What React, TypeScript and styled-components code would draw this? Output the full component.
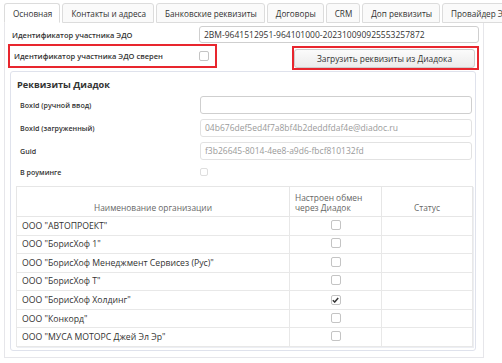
import styled, { createGlobalStyle } from "styled-components";

const GlobalStyle = createGlobalStyle`
    html, body {
        margin: 0;
        padding: 0;
        background: #fff;
    }
    body {
        font-family: "Open Sans", "Liberation Sans", sans-serif;
        color: #333;
    }
`

const Page = styled.div`
    width: 502px;
    height: 363px;
    padding: 3px 0 0 4px;
    box-sizing: border-box;
    overflow: hidden;
`
const TabBar = styled.div`
    display: flex;
    height: 20px;
    width: 700px;
`
const Tab = styled.div<{ active?: boolean }>`
    display: flex;
    align-items: center;
    padding: 0 7px 0 8px;
    margin-right: 2px;
    font-size: 8.2px;
    color: #333;
    white-space: nowrap;
    background: ${p => p.active ? '#fff' : '#fafafa'};
    border: 1px solid #dcdcdc;
    border-bottom: ${p => p.active ? '1px solid #fff' : '1px solid #dcdcdc'};
    border-radius: 3px 3px 0 0;
    box-sizing: border-box;
`
const Content = styled.div`
    width: 480px;
    border: 1px solid #e6e6ea;
    border-top: 0;
    padding: 3px 4px 6px 3px;
    box-sizing: border-box;
`
const TopRow = styled.div`
    display: grid;
    grid-template-columns: 191px 1fr;
    align-items: center;
    height: 17px;
`
const Label = styled.div<{ small?: boolean }>`
    font-size: ${p => p.small ? 7.1 : 7.5}px;
    font-weight: 600;
    color: #333;
    padding-left: 4px;
    white-space: nowrap;
`
const Input = styled.div<{ muted?: boolean, h?: number }>`
    height: ${p => p.h ?? 17}px;
    border: 1px solid ${p => p.muted ? '#e2e2e2' : '#cfcfcf'};
    border-radius: 3px;
    box-sizing: border-box;
    display: flex;
    align-items: center;
    padding: 0 4px;
    font-size: 8.5px;
    color: ${p => p.muted ? '#9a9a9a' : '#333'};
    white-space: nowrap;
    overflow: hidden;
`
const CheckRow = styled.div`
    display: flex;
    justify-content: space-between;
    align-items: flex-start;
    margin-top: 1px;
`
const RedFrame = styled.div<{ w: number }>`
    width: ${p => p.w}px;
    border: 2px solid #e8262e;
    box-sizing: border-box;
`
const SyncedBox = styled.div`
    display: grid;
    grid-template-columns: 189px 1fr;
    align-items: center;
    height: 20px;
`
const ButtonFrame = styled(RedFrame)`
    margin-top: 2px;
    padding: 1px 2px 0 0;
    height: 24px;
`
const Button = styled.div`
    height: 19px;
    border: 1px solid #cdcdcd;
    border-radius: 3px;
    background: linear-gradient(#fbfbfb, #ececec);
    display: flex;
    align-items: center;
    justify-content: center;
    font-size: 8.4px;
    color: #333;
    box-sizing: border-box;
`
const Box = styled.span<{ size?: number, disabled?: boolean }>`
    display: inline-flex;
    align-items: center;
    justify-content: center;
    width: ${p => p.size ?? 10}px;
    height: ${p => p.size ?? 10}px;
    border: 1px solid ${p => p.disabled ? '#dedede' : '#c4c4c4'};
    border-radius: 2px;
    box-sizing: border-box;
    background: #fff;
`
const Panel = styled.div`
    width: 466px;
    margin: 1px 0 0 2px;
    border: 1px solid #dfe2ec;
    border-radius: 3px;
    padding: 5px 3px 3px 5px;
    box-sizing: border-box;
`
const PanelTitle = styled.div`
    font-size: 9.2px;
    font-weight: 700;
    height: 16px;
    line-height: 16px;
    padding-left: 1px;
`
const FormRow = styled.div<{ h?: number }>`
    display: grid;
    grid-template-columns: 184px 1fr;
    align-items: center;
    height: ${p => p.h ?? 23}px;
`
const Table = styled.table`
    width: 456px;
    margin-top: 4px;
    border-collapse: collapse;
    table-layout: fixed;
    font-size: 8.7px;
    border: 1px solid #dedede;
    box-shadow: 1px 1px 0 #eceef3;
`
const Th = styled.th<{ align?: string }>`
    height: 26px;
    padding: 0 5px 3px;
    font-size: 8.4px;
    font-weight: 400;
    color: #666;
    text-align: ${p => p.align ?? 'center'};
    vertical-align: bottom;
    border: 1px solid #e6e6e6;
    line-height: 10px;
`
const Td = styled.td<{ center?: boolean }>`
    height: 18.57px;
    padding: 0 5px;
    border: 1px solid #e8e8e8;
    text-align: ${p => p.center ? 'center' : 'left'};
    vertical-align: middle;
    color: #333;
    white-space: nowrap;
    line-height: 10px;
    box-sizing: border-box;
`

function Checkbox({ checked, size, disabled }: { checked?: boolean, size?: number, disabled?: boolean }) {
    return (
        <Box size={size} disabled={disabled}>
            {checked && (
                <svg width="7" height="6" viewBox="0 0 7 6">
                    <path d="M0.8 3.2 L2.7 5 L6.2 0.9" fill="none" stroke="#333" strokeWidth="1.5" />
                </svg>
            )}
        </Box>
    )
}

const tabs = ["Основная", "Контакты и адреса", "Банковские реквизиты", "Договоры", "CRM", "Доп реквизиты", "Провайдер ЭДО"];

const orgs = [
    { name: 'ООО "АВТОПРОЕКТ"', on: false },
    { name: 'ООО "БорисХоф 1"', on: false },
    { name: 'ООО "БорисХоф Менеджмент Сервисез (Рус)"', on: false },
    { name: 'ООО "БорисХоф Т"', on: false },
    { name: 'ООО "БорисХоф Холдинг"', on: true },
    { name: 'ООО "Конкорд"', on: false },
    { name: 'ООО "МУСА МОТОРС Джей Эл Эр"', on: false },
];

export default function App() {
    return (
        <>
            <GlobalStyle />
            <Page>
                <TabBar>
                    {tabs.map((t, i) => <Tab key={t} active={i === 0}>{t}</Tab>)}
                </TabBar>
                <Content>
                    <TopRow>
                        <Label>Идентификатор участника ЭДО</Label>
                        <Input>2BM-9641512951-964101000-202310090925553257872</Input>
                    </TopRow>
                    <CheckRow>
                        <RedFrame w={209}>
                            <SyncedBox>
                                <Label>Идентификатор участника ЭДО сверен</Label>
                                <Checkbox />
                            </SyncedBox>
                        </RedFrame>
                        <ButtonFrame w={187}>
                            <Button>Загрузить реквизиты из Диадока</Button>
                        </ButtonFrame>
                    </CheckRow>
                    <Panel>
                        <PanelTitle>Реквизиты Диадок</PanelTitle>
                        <FormRow>
                            <Label small>BoxId (ручной ввод)</Label>
                            <Input h={18} />
                        </FormRow>
                        <FormRow>
                            <Label small>BoxId (загруженный)</Label>
                            <Input h={18} muted>04b676def5ed4f7a8bf4b2deddfdaf4e@diadoc.ru</Input>
                        </FormRow>
                        <FormRow>
                            <Label small>Guid</Label>
                            <Input h={18} muted>f3b26645-8014-4ee8-a9d6-fbcf810132fd</Input>
                        </FormRow>
                        <FormRow h={20}>
                            <Label small>В роуминге</Label>
                            <Checkbox size={8} disabled />
                        </FormRow>
                        <Table>
                            <colgroup>
                                <col style={{ width: 273 }} />
                                <col style={{ width: 92 }} />
                                <col style={{ width: 91 }} />
                            </colgroup>
                            <thead>
                                <tr>
                                    <Th>Наименование организации</Th>
                                    <Th align="left">Настроен обмен через Диадок</Th>
                                    <Th>Статус</Th>
                                </tr>
                            </thead>
                            <tbody>
                                {orgs.map(o => (
                                    <tr key={o.name}>
                                        <Td>{o.name}</Td>
                                        <Td center><Checkbox checked={o.on} /></Td>
                                        <Td />
                                    </tr>
                                ))}
                            </tbody>
                        </Table>
                    </Panel>
                </Content>
            </Page>
        </>
    )
}
